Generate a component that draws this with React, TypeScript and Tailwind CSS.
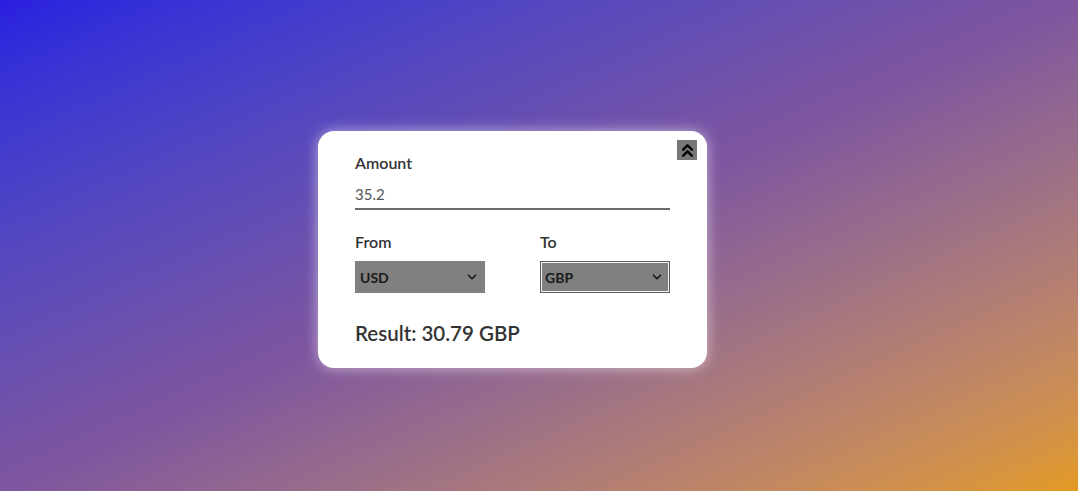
import { ChevronsUp, ChevronDown } from "lucide-react";

// ─── Currency Select ──────────────────────────────────────────────────────────
// Flat grey select with a small chevron on the right.

const CurrencySelect = ({
  value,
  focused = false,
}: {
  value:    string;
  focused?: boolean;
}) => (
  <div className="relative">
    <select
      defaultValue={value}
      className={`w-full h-[32px] appearance-none bg-[#808080] pl-[4px] pr-6 text-[14px] font-bold text-[#1a1a1a] outline-none ${
        focused
          ? "border border-[#5c5c5c] shadow-[inset_0_0_0_1px_#f2f2f2]"
          : "border border-[#808080]"
      }`}
    >
      <option>USD</option>
      <option>EUR</option>
      <option>GBP</option>
      <option>JPY</option>
    </select>
    <ChevronDown
      size={14}
      strokeWidth={3}
      className="absolute right-[6px] top-1/2 -translate-y-1/2 text-[#1a1a1a] pointer-events-none"
    />
  </div>
);

// ─── App ──────────────────────────────────────────────────────────────────────

export default function App() {
  return (
    <div
      className="min-h-[491px] w-full flex items-center justify-center pr-[53px] pt-[8px] bg-gradient-to-br from-[#2a1ee0] via-[#7e559f] to-[#e39a1c]"
      style={{ fontFamily: "Lato, 'Open Sans', sans-serif" }}
    >
      <div className="relative w-[389px] bg-white rounded-[16px] px-[37px] pt-[20px] pb-[21px] shadow-[0_0_14px_rgba(255,255,255,0.55)]">
        {/* Collapse button */}
        <button
          className="absolute top-[9px] right-[10px] w-[20px] h-[20px] bg-[#787878] flex items-center justify-center overflow-visible"
          aria-label="Collapse"
        >
          <ChevronsUp size={21} strokeWidth={2.8} className="shrink-0 text-black" />
        </button>

        {/* Amount */}
        <label className="block text-[16px] leading-[24px] font-semibold text-[#333]">
          Amount
        </label>
        <input
          defaultValue="35.2"
          className="mt-[7px] block w-full bg-transparent text-[15px] leading-[24px] pb-[2px] text-[#555] border-b-2 border-[#6a6a6a] outline-none"
        />

        {/* From / To */}
        <div className="mt-[20px] grid grid-cols-2 gap-x-[55px]">
          <div>
            <label className="block text-[16px] leading-[24px] font-semibold text-[#333] mb-[7px]">
              From
            </label>
            <CurrencySelect value="USD" />
          </div>
          <div>
            <label className="block text-[16px] leading-[24px] font-semibold text-[#333] mb-[7px]">
              To
            </label>
            <CurrencySelect value="GBP" focused />
          </div>
        </div>

        {/* Result */}
        <p className="mt-[26px] text-[20.5px] leading-[28px] font-semibold text-[#333]">
          Result: 30.79 GBP
        </p>
      </div>
    </div>
  );
}
